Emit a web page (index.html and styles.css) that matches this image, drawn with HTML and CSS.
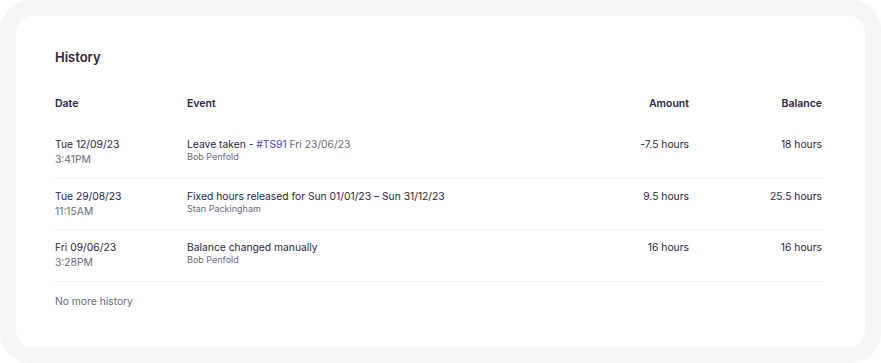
FILE: index.html
```html
<!DOCTYPE html>
<html>
<head>
<meta charset="utf-8">
<link rel="stylesheet" href="styles.css">
</head>
<body>
<div class="frame">
  <div class="card">
    <h2 class="title">History</h2>
    <div class="table">
      <div class="row head">
        <div class="c-date">Date</div>
        <div class="c-event">Event</div>
        <div class="c-amount">Amount</div>
        <div class="c-balance">Balance</div>
      </div>
      <div class="row item">
        <div class="c-date"><div class="main">Tue 12/09/23</div><div class="sub-time">3:41PM</div></div>
        <div class="c-event"><div class="main">Leave taken - <span class="link">#TS91</span> <span class="muted">Fri 23/06/23</span></div><div class="sub">Bob Penfold</div></div>
        <div class="c-amount main">-7.5 hours</div>
        <div class="c-balance main">18 hours</div>
      </div>
      <div class="row item">
        <div class="c-date"><div class="main">Tue 29/08/23</div><div class="sub-time">11:15AM</div></div>
        <div class="c-event"><div class="main">Fixed hours released for Sun 01/01/23 – Sun 31/12/23</div><div class="sub">Stan Packingham</div></div>
        <div class="c-amount main">9.5 hours</div>
        <div class="c-balance main">25.5 hours</div>
      </div>
      <div class="row item">
        <div class="c-date"><div class="main">Fri 09/06/23</div><div class="sub-time">3:28PM</div></div>
        <div class="c-event"><div class="main">Balance changed manually</div><div class="sub">Bob Penfold</div></div>
        <div class="c-amount main">16 hours</div>
        <div class="c-balance main">16 hours</div>
      </div>
    </div>
    <div class="end">No more history</div>
  </div>
</div>
</body>
</html>
```
FILE: styles.css
```css
* { box-sizing: border-box; }
html, body { margin: 0; padding: 0; background: #ffffff; }
body {
  font-family: Inter, "Noto Sans", sans-serif;
  color: #29263f;
  width: 881px;
  height: 363px;
  overflow: hidden;
}
.frame {
  width: 881px;
  height: 363px;
  background: #f6f6f9;
  border-radius: 30px;
  padding: 16px;
}
.card {
  background: #ffffff;
  border-radius: 16px;
  height: 331px;
  padding: 31px 43px 0 39px;
}
.title {
  margin: 0;
  font-size: 13px;
  font-weight: 600;
  line-height: 20px;
  color: #29263f;
}
.table { margin-top: 29px; }
.row {
  display: grid;
  grid-template-columns: 132px 1fr 140px 133px;
  align-items: start;
}
.head {
  font-size: 10.5px;
  font-weight: 600;
  line-height: 15px;
  height: 31px;
}
.item {
  padding: 10px 0 10.5px;
  border-bottom: 1px solid #efeff2;
  font-size: 10.3px;
  line-height: 15px;
}
.c-amount, .c-balance { text-align: right; }
.main { color: #29263f; }
.sub-time { color: #6b6a7a; }
.sub { color: #6b6a7a; font-size: 9px; line-height: 13px; margin-top: -2px; }
.link { color: #4b3fd3; }
.muted { color: #6b6a7a; }
.end {
  margin-top: 12.5px;
  font-size: 10.3px;
  line-height: 15px;
  color: #6b6a7a;
}
```
